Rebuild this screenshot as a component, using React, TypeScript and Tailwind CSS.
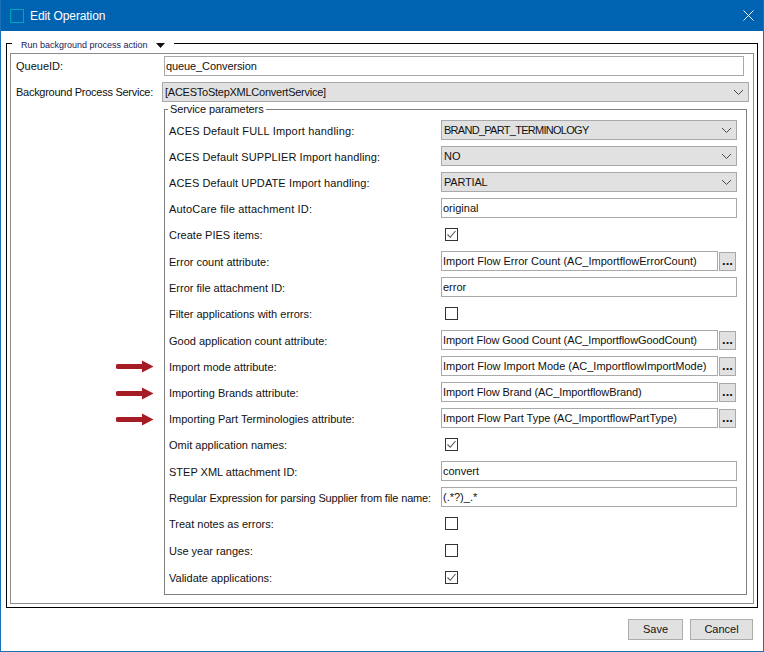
import React from "react";

type Row = { label: string; kind: "select" | "text" | "check" | "picker"; value?: string; checked?: boolean; labelClass?: string; valueClass?: string };

const rows: Row[] = [
  { label: "ACES Default FULL Import handling:", kind: "select", value: "BRAND_PART_TERMINOLOGY", labelClass: "tracking-[0.18px]", valueClass: "tracking-[-0.72px]" },
  { label: "ACES Default SUPPLIER Import handling:", kind: "select", value: "NO", labelClass: "tracking-[0.1px]" },
  { label: "ACES Default UPDATE Import handling:", kind: "select", value: "PARTIAL", labelClass: "tracking-[0.11px]", valueClass: "tracking-[-0.2px]" },
  { label: "AutoCare file attachment ID:", kind: "text", value: "original", labelClass: "tracking-[0.18px]" },
  { label: "Create PIES items:", kind: "check", checked: true },
  { label: "Error count attribute:", kind: "picker", value: "Import Flow Error Count (AC_ImportflowErrorCount)" },
  { label: "Error file attachment ID:", kind: "text", value: "error" },
  { label: "Filter applications with errors:", kind: "check", checked: false },
  { label: "Good application count attribute:", kind: "picker", value: "Import Flow Good Count (AC_ImportflowGoodCount)", valueClass: "tracking-[-0.1px]" },
  { label: "Import mode attribute:", kind: "picker", value: "Import Flow Import Mode (AC_ImportflowImportMode)" },
  { label: "Importing Brands attribute:", kind: "picker", value: "Import Flow Brand (AC_ImportflowBrand)", valueClass: "tracking-[-0.08px]" },
  { label: "Importing Part Terminologies attribute:", kind: "picker", value: "Import Flow Part Type (AC_ImportflowPartType)" },
  { label: "Omit application names:", kind: "check", checked: true },
  { label: "STEP XML attachment ID:", kind: "text", value: "convert" },
  { label: "Regular Expression for parsing Supplier from file name:", kind: "text", value: "(.*?)_.*", labelClass: "tracking-[-0.15px]" },
  { label: "Treat notes as errors:", kind: "check", checked: false },
  { label: "Use year ranges:", kind: "check", checked: false },
  { label: "Validate applications:", kind: "check", checked: true },
];

function Chevron() {
  return (
    <svg width="11" height="7" viewBox="0 0 11 7" className="shrink-0">
      <path d="M1 1l4.5 4.5L10 1" fill="none" stroke="#4a4a4a" strokeWidth="1" />
    </svg>
  );
}

function Select({ value, className, textClass }: { value: string; className: string; textClass?: string }) {
  return (
    <div className={`flex h-5 items-center justify-between border border-[#a9a9a9] bg-[#e1e1e1] pl-[2px] pr-[4px] ${className}`}>
      <span className={textClass}>{value}</span>
      <Chevron />
    </div>
  );
}

function TextBox({ value, className, textClass }: { value: string; className: string; textClass?: string }) {
  return (
    <div className={`flex h-5 items-center whitespace-nowrap border border-[#a9a9a9] bg-white pl-[1px] ${className}`}>
      <span className={textClass}>{value}</span>
    </div>
  );
}

function Check({ checked }: { checked: boolean }) {
  return (
    <div className="ml-[4px] flex h-[13px] w-[13px] items-center justify-center border border-[#333333] bg-white">
      {checked && (
        <svg width="11" height="11" viewBox="0 0 11 11">
          <path d="M1.5 5.5l2.8 2.8L9.5 2" fill="none" stroke="#555555" strokeWidth="1.1" />
        </svg>
      )}
    </div>
  );
}

function Arrow({ className }: { className: string }) {
  return (
    <svg width="38" height="13" viewBox="0 0 38 13" className={`absolute left-[105px] ${className}`}>
      <path d="M2 4h24V0.5L37.5 6.5 26 12.5V9H2a2.5 2.5 0 0 1 0-5z" fill="#a51c24" />
    </svg>
  );
}

function ParamRow({ row }: { row: Row }) {
  const isCheck = row.kind === "check";
  return (
    <div className={`flex ${isCheck ? "h-[27px]" : "h-[26px] items-center"}`}>
      <div className={`w-[272px] shrink-0 whitespace-nowrap ${isCheck ? "pt-[6px]" : "pb-[4px]"} ${row.labelClass ?? ""}`}>{row.label}</div>
      {row.kind === "select" && <Select value={row.value!} className="mb-[6px] w-[296px]" textClass={row.valueClass} />}
      {row.kind === "text" && <TextBox value={row.value!} className="mb-[6px] w-[296px]" textClass={row.valueClass} />}
      {isCheck && <div className="pt-[4px]"><Check checked={!!row.checked} /></div>}
      {row.kind === "picker" && (
        <div className="mb-[6px] flex items-center gap-[1px]">
          <TextBox value={row.value!} className="w-[277px]" textClass={row.valueClass} />
          <div className="flex h-[19px] w-[17px] items-end justify-center border border-[#a9a9a9] bg-[#e1e1e1] pb-[3px] text-[13px] font-bold leading-none">
            ...
          </div>
        </div>
      )}
    </div>
  );
}

export default function App() {
  return (
    <div className="relative flex h-[652px] w-[764px] flex-col overflow-hidden border-x border-b border-[#1a70b8] bg-white font-['Liberation_Sans',sans-serif] text-[11px] leading-none text-[#111111]">
      <div className="flex h-[31px] shrink-0 items-center bg-[#0063b1] pl-[9px] pr-[10px] text-white">
        <div className="h-[14px] w-[14px] border border-[#00a5b8]" />
        <span className="ml-[6px] text-[12px] tracking-[-0.1px]">Edit Operation</span>
        <svg width="11" height="11" viewBox="0 0 11 11" className="ml-auto mr-[-1px]">
          <path d="M0.5 0.5l10 10M10.5 0.5l-10 10" stroke="#ffffff" strokeWidth="1" fill="none" />
        </svg>
      </div>

      <div className="relative mx-[5px] mt-[12px] h-[565px] border border-black px-[3px] pb-[3px] pt-[9px]">
        <div className="absolute left-[5px] top-[-3px] flex items-center bg-white px-[9px] text-[9px] text-[#20205a]">
          Run background process action
          <svg width="9" height="5" viewBox="0 0 9 5" className="ml-[8px]">
            <path d="M0 0h9L4.5 5z" fill="#111111" />
          </svg>
        </div>
        <div className="relative h-[551px] border border-[#8c8c8c]">
          <Arrow className="top-[306px]" />
          <Arrow className="top-[333px]" />
          <Arrow className="top-[359px]" />
          <div className="flex h-[24px] items-center">
            <div className="w-[153px] pl-[5px]">QueueID:</div>
            <TextBox value="queue_Conversion" className="w-[580px] px-[2px]" textClass="tracking-[-0.1px]" />
          </div>
          <div className="mt-[2px] flex h-[24px] items-center">
            <div className="w-[151px] pl-[5px] whitespace-nowrap tracking-[-0.27px]">Background Process Service:</div>
            <Select value="[ACESToStepXMLConvertService]" className="w-[587px]" textClass="tracking-[-0.25px]" />
          </div>
          <div className="relative ml-[153px] mt-[5px] h-[486px] w-[583px] border border-[#808080] px-[4px] pt-[10px]">
            <div className="absolute left-[3px] top-[-6px] bg-white px-[2px] tracking-[-0.1px]">Service parameters</div>
            {rows.map((r) => (
              <ParamRow key={r.label} row={r} />
            ))}
          </div>
        </div>
      </div>

      <div className="mt-[11px] flex justify-end gap-[7px] pr-[10px]">
        <div className="flex h-[21px] w-[55px] items-center justify-center border border-[#adadad] bg-[#e1e1e1]">Save</div>
        <div className="flex h-[21px] w-[63px] items-center justify-center border border-[#adadad] bg-[#e1e1e1]">Cancel</div>
      </div>
    </div>
  );
}
